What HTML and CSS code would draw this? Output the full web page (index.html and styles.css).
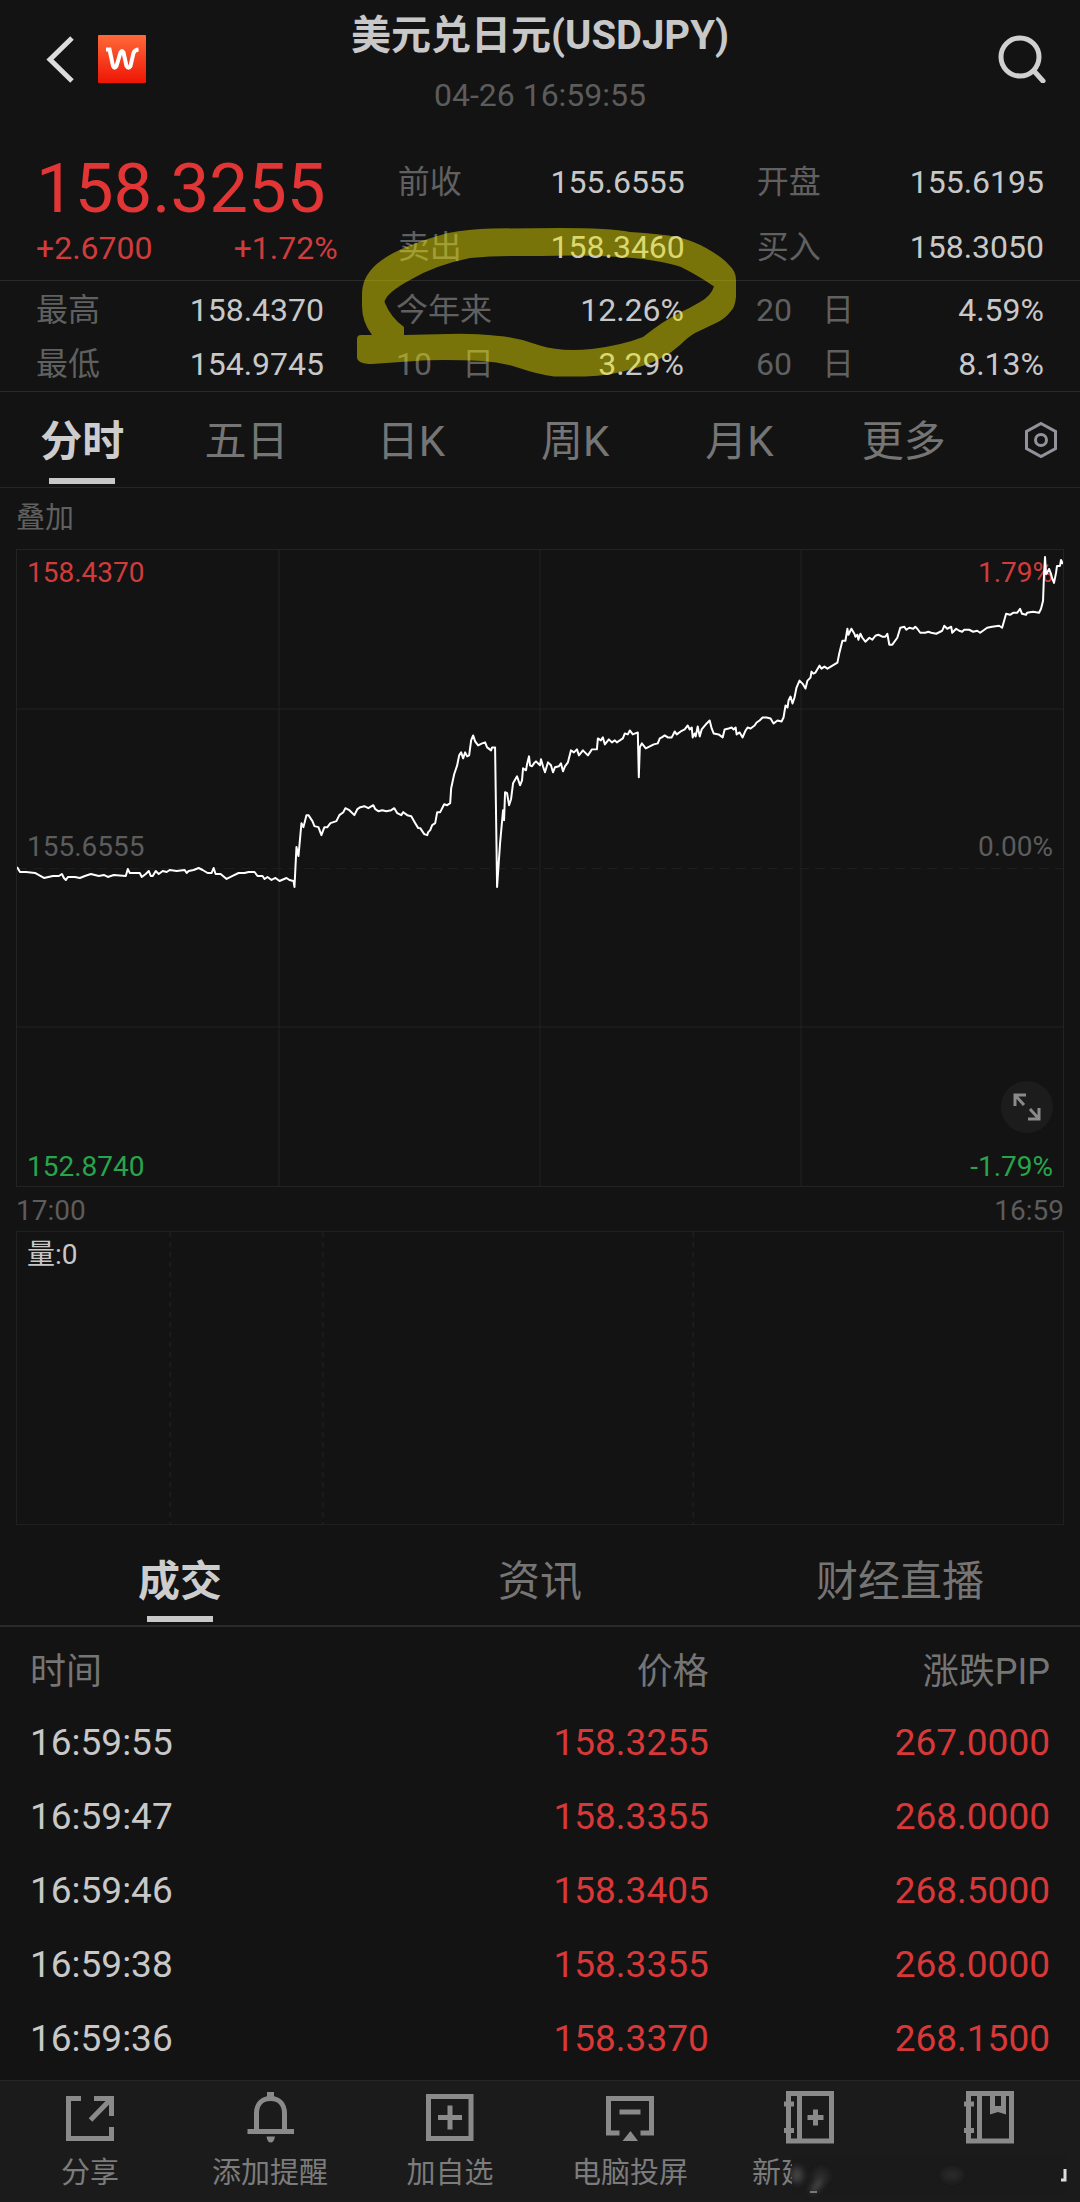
FILE: index.html
```html
<!DOCTYPE html>
<html lang="zh-CN">
<head>
<meta charset="utf-8">
<meta name="viewport" content="width=device-width, initial-scale=1">
<title>美元兑日元(USDJPY)</title>
<link rel="stylesheet" href="styles.css">
</head>
<body>
<header class="topbar">
  <div class="topbar-left">
    <button class="icon-button" type="button" aria-label="返回">
      <svg width="32" height="48" viewBox="0 0 32 48"><path d="M28 3 6 24.500 28 46" fill="none" stroke="#dcdcdc" stroke-width="5"/></svg>
    </button>
    <a class="icon-button" href="#" aria-label="首页">
      <svg width="48" height="48" viewBox="0 0 48 48">
        <defs><linearGradient id="brand" x1="0" y1="0" x2="0" y2="1"><stop offset="0" stop-color="#ff6a38"/><stop offset="1" stop-color="#ee1505"/></linearGradient></defs>
        <rect width="48" height="48" rx="1" fill="url(#brand)"/>
        <path d="M8 14.500H11.500L15 31Q16.500 34.500 18.500 31L22.500 17.500Q24 14.500 25.500 17.500L28.500 31Q30.500 34.500 32.500 31L35.500 18Q36.500 15 40.500 14.500" fill="none" stroke="#fff" stroke-width="4"/>
      </svg>
    </a>
  </div>
  <div class="heading">
    <h1>美元兑日元(USDJPY)</h1>
    <p>04-26 16:59:55</p>
  </div>
  <div class="topbar-right">
    <button class="icon-button" type="button" aria-label="搜索">
      <svg width="48" height="48" viewBox="0 0 48 48" fill="none" stroke="#d0d0d0" stroke-width="5"><circle cx="22" cy="22" r="19"/><path d="m36 36 9 10" stroke-linecap="round"/></svg>
    </button>
  </div>
</header>

<main>
<section class="quote">
  <div class="quote-top">
    <div class="last">
      <strong>158.3255</strong>
      <div class="change"><span>+2.6700</span><span>+1.72%</span></div>
    </div>
    <dl>
      <div><dt>前收</dt><dd>155.6555</dd></div>
      <div><dt>卖出</dt><dd>158.3460</dd></div>
    </dl>
    <dl>
      <div><dt>开盘</dt><dd>155.6195</dd></div>
      <div><dt>买入</dt><dd>158.3050</dd></div>
    </dl>
  </div>
  <div class="quote-more">
    <dl>
      <div><dt>最高</dt><dd>158.4370</dd></div>
      <div><dt>最低</dt><dd>154.9745</dd></div>
    </dl>
    <dl>
      <div><dt>今年来</dt><dd>12.26%</dd></div>
      <div><dt><span>10</span><span>日</span></dt><dd>3.29%</dd></div>
    </dl>
    <dl>
      <div><dt><span>20</span><span>日</span></dt><dd>4.59%</dd></div>
      <div><dt><span>60</span><span>日</span></dt><dd>8.13%</dd></div>
    </dl>
  </div>
  <svg class="marker" viewBox="356 226 382 152" aria-hidden="true">
    <path fill-rule="evenodd" d="M361 335H372Q362 322 362 306V294Q362 274 382 260Q401 246 448 233Q468 229 492 228.500L560 228Q610 228 630 232Q660 234 678 237Q696 242 706 248Q722 257 728 264Q736 271 736 280V297Q735 307 731 311Q725 319 716 323L695 333Q688 337 680 345Q664 360 636 368Q610 376 585 376.500H554Q540 375 516 367Q500 362 482 361Q440 359 415 361L372 364Q357 364 357 357V339Q357 335 361 335ZM404 335V327Q391 318 384.500 302Q386 293 410 280Q435 265 470 258Q490 256 510 256H540Q600 254 643 259Q666 262 681 267Q699 276 714 286.500Q711 296 700 302Q690 308 681 312Q663 321 643 337Q623 345 592 349Q560 352 540 345.500Q520 338 499 336Q470 333 448 334Z"/>
  </svg>
</section>

<nav class="periods" aria-label="周期">
  <button type="button" class="active">分时</button>
  <button type="button">五日</button>
  <button type="button">日K</button>
  <button type="button">周K</button>
  <button type="button">月K</button>
  <button type="button">更多</button>
  <button type="button" class="settings" aria-label="图表设置">
    <svg width="34" height="38" viewBox="0 0 34 38" fill="none" stroke="#92929a" stroke-width="3"><path d="M17 2.500 31.500 10.500V27.500L17 35.500 2.500 27.500V10.500Z"/><circle cx="17" cy="19" r="5.500"/></svg>
  </button>
</nav>

<section class="charts">
  <button type="button" class="overlay-button">叠加</button>
  <div class="price-chart">
    <svg class="plot" viewBox="16 549 1048 638" preserveAspectRatio="none" role="img" aria-label="分时走势">
      <g class="grid-lines"><path d="M16 708.500H1064M16 1027.500H1064M278.500 549V1187M540 549V1187M801.500 549V1187"/><path class="base" d="M16 868.500H1064" stroke-dasharray="10 6"/></g>
    </svg>
    <span class="tag up">158.4370</span><span class="tag up end">1.79%</span>
    <span class="tag flat mid">155.6555</span><span class="tag flat mid end">0.00%</span>
    <span class="tag down low">152.8740</span><span class="tag down low end">-1.79%</span>
    <svg class="plot" viewBox="16 549 1048 638" preserveAspectRatio="none" aria-hidden="true">
      <polyline class="trace" points="16,867 19,872 25,872 34,873 43,878 52,876 58,876 61,874 63,878 65,880 67,877 74,877 79,878 84,876 90,874 98,876 103,875 107,877 113,875 125,876 127,869 129,873 139,873 141,877 145,874 148,871 150,876 152,876 155,871 158,874 162,871 166,872 169,870 176,871 184,870 186,873 188,871 193,870 198,868 202,870 207,873 211,873 213,868 215,874 220,874 226,879 232,876 238,873 244,873 248,872 254,872 257,876 262,876 264,879 267,877 271,880 275,878 279,881 286,878 289,880 293,881 294,887 296,847 298,856 301,823 303,827 306,815 308,815 312,821 314,826 318,827 321,835 324,827 327,827 330,823 336,821 339,815 343,812 345,808 349,810 354,815 357,809 360,807 364,806 368,808 373,805 375,809 378,811 382,810 386,811 391,810 394,808 397,813 401,815 403,812 407,815 411,816 415,823 418,828 420,828 424,834 427,835 428,832 430,830 432,825 435,823 437,812 440,812 444,804 447,805 450,803 451,788 454,774 457,765 459,755 461,752 463,758 465,752 467,756 469,755 471,740 473,735 475,741 478,745 482,743 485,742 487,747 491,750 492,747 495,747 497,887 500,843 503,810 504,820 505,792 507,793 509,805 511,799 513,783 517,776 520,785 522,780 523,768 526,770 527,764 529,756 530,765 532,766 534,763 536,761 540,765 541,759 543,766 545,772 548,762 551,765 553,772 555,767 559,766 561,763 563,771 565,766 568,762 571,750 574,752 577,749 579,755 583,750 588,755 592,749 597,749 598,738 601,740 603,737 605,744 609,739 612,742 615,740 617,742 623,738 625,733 628,734 630,730 633,734 638,732 639,777 640,747 642,743 646,748 650,746 654,744 658,743 660,738 662,737 665,735 668,737 672,737 675,731 677,734 681,731 685,729 688,725 690,729 692,727 693,737 695,733 696,736 698,726 700,736 702,729 707,723 710,720 712,728 714,733 719,734 723,737 725,729 729,728 732,727 734,729 736,727 737,734 740,732 743,737 746,730 748,727 751,728 755,725 757,722 760,720 763,717 767,717 771,718 774,723 778,720 782,721 784,717 786,705 788,707 789,700 791,696 793,703 795,697 797,687 800,680 803,683 806,688 808,680 811,677 812,671 814,673 816,672 820,665 822,668 825,666 828,668 833,665 838,662 840,652 843,640 846,640 848,628 849,634 852,628 855,633 856,636 858,634 859,639 861,633 863,637 866,641 870,637 873,639 876,635 879,634 883,636 886,636 888,633 890,644 893,644 898,637 901,627 905,626 907,629 910,627 914,628 916,626 918,628 921,632 926,632 929,631 932,632 937,633 943,630 945,625 948,628 952,626 953,632 957,628 960,630 963,631 965,629 970,629 974,631 978,630 981,632 988,627 993,626 1000,625 1003,627 1005,620 1007,613 1011,614 1014,612 1018,612 1021,608 1023,613 1027,614 1028,612 1034,611 1040,612 1042,608 1044,600 1045,573 1046,556 1047,573 1048,572 1050,568 1052,573 1053,577 1055,582 1057,572 1058,565 1061,565 1062,559 1064,563"/>
    </svg>
    <button type="button" class="expand" aria-label="全屏">
      <svg width="28" height="28" viewBox="0 0 28 28" fill="none" stroke="#8a8a8a" stroke-width="3"><path d="M2 13V2H13M2 2 11 12M26 15V26H15M26 26 17 16"/></svg>
    </button>
  </div>
  <div class="axis"><span>17:00</span><span>16:59</span></div>
  <div class="volume-chart">
    <svg class="plot" viewBox="16 1231 1048 294" preserveAspectRatio="none" aria-hidden="true"><path d="M169.500 1231V1525M322.500 1231V1525M693.500 1231V1525" stroke="#262626" stroke-dasharray="5 5" vector-effect="non-scaling-stroke"/></svg>
    <span class="volume-label">量:0</span>
  </div>
</section>

<nav class="sections" aria-label="栏目">
  <button type="button" class="active">成交</button>
  <button type="button">资讯</button>
  <button type="button">财经直播</button>
</nav>

<table class="trades">
  <thead><tr><th scope="col">时间</th><th scope="col">价格</th><th scope="col">涨跌PIP</th></tr></thead>
  <tbody>
    <tr><td>16:59:55</td><td>158.3255</td><td>267.0000</td></tr>
    <tr><td>16:59:47</td><td>158.3355</td><td>268.0000</td></tr>
    <tr><td>16:59:46</td><td>158.3405</td><td>268.5000</td></tr>
    <tr><td>16:59:38</td><td>158.3355</td><td>268.0000</td></tr>
    <tr><td>16:59:36</td><td>158.3370</td><td>268.1500</td></tr>
  </tbody>
</table>
</main>

<footer class="actions">
  <button type="button">
    <svg viewBox="0 0 54 54"><path d="M18 7.500H5.500V47.500H48.500V36M31 7.500H48.500V25M48 8 27.500 29"/></svg>
    <span>分享</span>
  </button>
  <button type="button">
    <svg viewBox="0 0 54 54"><path d="M13.500 40V22.500C13.500 13 19 7.500 27.500 7.500S41.500 13 41.500 22.500V40M4.500 40.500H51"/><path class="solid" d="M24 1H31V7H24ZM23.500 45.500H32Q31 51.500 27.700 51.500T23.500 45.500Z"/></svg>
    <span>添加提醒</span>
  </button>
  <button type="button">
    <svg viewBox="0 0 54 54"><path d="M5.500 5.500H48V47.500H5.500ZM15 26.500H39M27 14.500V38.500"/></svg>
    <span>加自选</span>
  </button>
  <button type="button">
    <svg viewBox="0 0 54 54"><path d="M16.500 42H5.500V7.500H48.500V42H37.500M16.500 21H37.500"/><path class="solid" d="M27.500 40 35 50H19.500Z"/></svg>
    <span>电脑投屏</span>
  </button>
  <button type="button">
    <svg viewBox="0 0 54 54"><path d="M5.500 2.500H48.500V50H5.500ZM16.500 3V50M1 13H11M1 39.500H11M24.500 26.500H40.500M32.500 18.500V34.500"/></svg>
    <span class="cut">新建</span>
  </button>
  <button type="button" aria-label="笔记">
    <svg viewBox="0 0 54 54"><path d="M5.500 2.500H48.500V50H5.500ZM16.500 3V50M1 13H11M1 39.500H11M29.500 3V19M40.500 3V19"/><path class="solid" d="M27 15H43V23.500L35 21 27 23.500Z"/></svg>
    <span></span>
  </button>
  <svg class="smudge" viewBox="0 0 280 42" aria-hidden="true">
    <defs><filter id="soft" x="-50%" y="-50%" width="200%" height="200%"><feGaussianBlur stdDeviation="3"/></filter></defs>
    <rect x="2" width="275" height="40" fill="#1a1a1a"/>
    <g filter="url(#soft)"><ellipse cx="7" cy="20" rx="6" ry="8" fill="#444"/><ellipse cx="31" cy="21" rx="8" ry="7" fill="#2c2c2c"/><ellipse cx="162" cy="20" rx="10" ry="6" fill="#2a2a2a"/><path d="M21 35Q27 34 30 26" stroke="#555" stroke-width="5" fill="none"/></g>
    <path d="M20 37H27" stroke="#777" stroke-width="2"/><path d="M275 14V25H271" stroke="#ddd" stroke-width="3" fill="none"/>
  </svg>
</footer>
</body>
</html>
```
FILE: styles.css
```css
* { box-sizing: border-box; }

body {
  margin: 0;
  background: #131313;
  color: #c8c8c8;
  font-family: Roboto, "Noto Sans CJK SC", sans-serif;
  font-size: 32px;
}

button {
  margin: 0;
  padding: 0;
  border: 0;
  background: none;
  color: inherit;
  font: inherit;
  cursor: pointer;
}

svg { display: block; }
h1, p, dl, dd { margin: 0; }

.topbar {
  display: grid;
  grid-template-columns: 1fr auto 1fr;
  align-items: center;
}
.topbar-left { display: flex; gap: 22px; padding-left: 44px; }
.topbar-right { display: flex; justify-content: flex-end; padding-right: 34px; }
.heading { padding: 10px 0 3px; text-align: center; }
.heading h1 { font-size: 40px; font-weight: 700; line-height: 52px; }
.heading p { margin-top: 13px; line-height: 40px; color: #5c5c5c; }

.quote { position: relative; border-bottom: 1px solid #2a2a2a; }
.quote-top,
.quote-more { display: grid; grid-template-columns: repeat(3, 1fr); }
.quote-top { padding-top: 32px; }
.quote-more { padding-top: 2px; border-top: 1px solid #2a2a2a; }
.quote dl { padding: 0 36px; }
.quote dl > div { display: flex; justify-content: space-between; }
.quote-top dl > div { line-height: 65px; }
.quote-more dl > div { line-height: 54px; }
.quote dt { display: flex; justify-content: space-between; width: 98px; color: #606060; }
.last { padding: 4px 24px 0 36px; color: #e23535; }
.last strong {
  display: block;
  padding-right: 12px;
  font-size: 69px;
  font-weight: 400;
  line-height: 70px;
  text-align: center;
}
.change { display: flex; justify-content: space-between; line-height: 48px; color: #d03c3c; }
.marker {
  position: absolute;
  left: 33%;
  top: 108px;
  width: 382px;
  height: 152px;
  fill: rgb(245 235 0 / 45%);
  pointer-events: none;
}

.periods { display: flex; border-bottom: 1px solid #262626; font-size: 42px; color: #757575; }
.periods button { position: relative; flex: 1; padding-top: 4px; line-height: 91px; }
.periods .settings { display: flex; flex: 0 0 94px; align-items: center; justify-content: flex-end; padding: 0 22px 0 0; }
.active { color: #cdcdcd; font-weight: 700; }
.active::after {
  content: "";
  position: absolute;
  left: 50%;
  bottom: 3px;
  width: 66px;
  height: 6px;
  margin-left: -33px;
  background: #c8c8c8;
}

.charts { padding: 0 16px; font-size: 28px; }
.overlay-button { display: block; line-height: 61px; color: #606060; font-size: 29px; }
.price-chart { position: relative; aspect-ratio: 1048 / 638; border: 1px solid #232323; }
.plot { position: absolute; inset: 0; width: 100%; height: 100%; }
.grid-lines { fill: none; stroke: #232323; }
.base { stroke: #1f1f1f; }
.trace { fill: none; stroke: #fff; stroke-width: 2; stroke-linejoin: round; }
.tag { position: absolute; left: 10px; top: 7px; line-height: 32px; }
.tag.end { left: auto; right: 10px; }
.tag.mid { top: 281px; }
.tag.low { top: auto; bottom: 3px; }
.up { color: #d03c3c; }
.flat { color: #5c5c5c; }
.down { color: #27a54b; }
.expand {
  position: absolute;
  right: 10px;
  bottom: 53px;
  display: grid;
  place-items: center;
  width: 52px;
  height: 52px;
  border-radius: 50%;
  background: #1c1c1c;
}
.axis { display: flex; justify-content: space-between; padding-top: 3px; line-height: 41px; color: #5c5c5c; }
.volume-chart { position: relative; min-height: 294px; padding: 2px 10px; border: 1px solid #202020; }
.volume-label { line-height: 42px; }

.sections {
  display: grid;
  grid-template-columns: repeat(3, 1fr);
  border-bottom: 2px solid #2a2a2a;
  color: #757575;
  font-size: 42px;
}
.sections button { position: relative; padding-top: 14px; line-height: 86px; }

.trades { width: 100%; margin: 4px 0 5px; border-collapse: collapse; table-layout: fixed; }
.trades th,
.trades td { height: 74px; padding: 0; text-align: right; }
.trades th { color: #757575; font-size: 36px; font-weight: 400; }
.trades td { color: #d83838; font-size: 37px; }
.trades th:nth-child(1),
.trades td:nth-child(1) { width: 33%; padding-left: 30px; text-align: left; }
.trades td:nth-child(1) { color: #c8c8c8; }
.trades th:nth-child(2),
.trades td:nth-child(2) { padding-right: 4px; }
.trades th:nth-child(3),
.trades td:nth-child(3) { width: 34%; padding-right: 30px; }

.actions {
  position: relative;
  display: grid;
  grid-template-columns: repeat(6, 1fr);
  padding: 10px 0 9px;
  border-top: 1px solid #262626;
  background: #1b1b1b;
  color: #7c7c7c;
  font-size: 29px;
}
.actions button { display: flex; flex-direction: column; align-items: center; gap: 8px; }
.actions button svg { width: 54px; height: 54px; fill: none; stroke: #8a8a8a; stroke-width: 5; }
.actions button .solid { fill: #8a8a8a; stroke: none; }
.actions span { height: 40px; line-height: 40px; }
.actions .cut { width: 116px; text-align: left; }
.smudge { position: absolute; right: 10px; bottom: 5px; width: 280px; height: 42px; }
```
